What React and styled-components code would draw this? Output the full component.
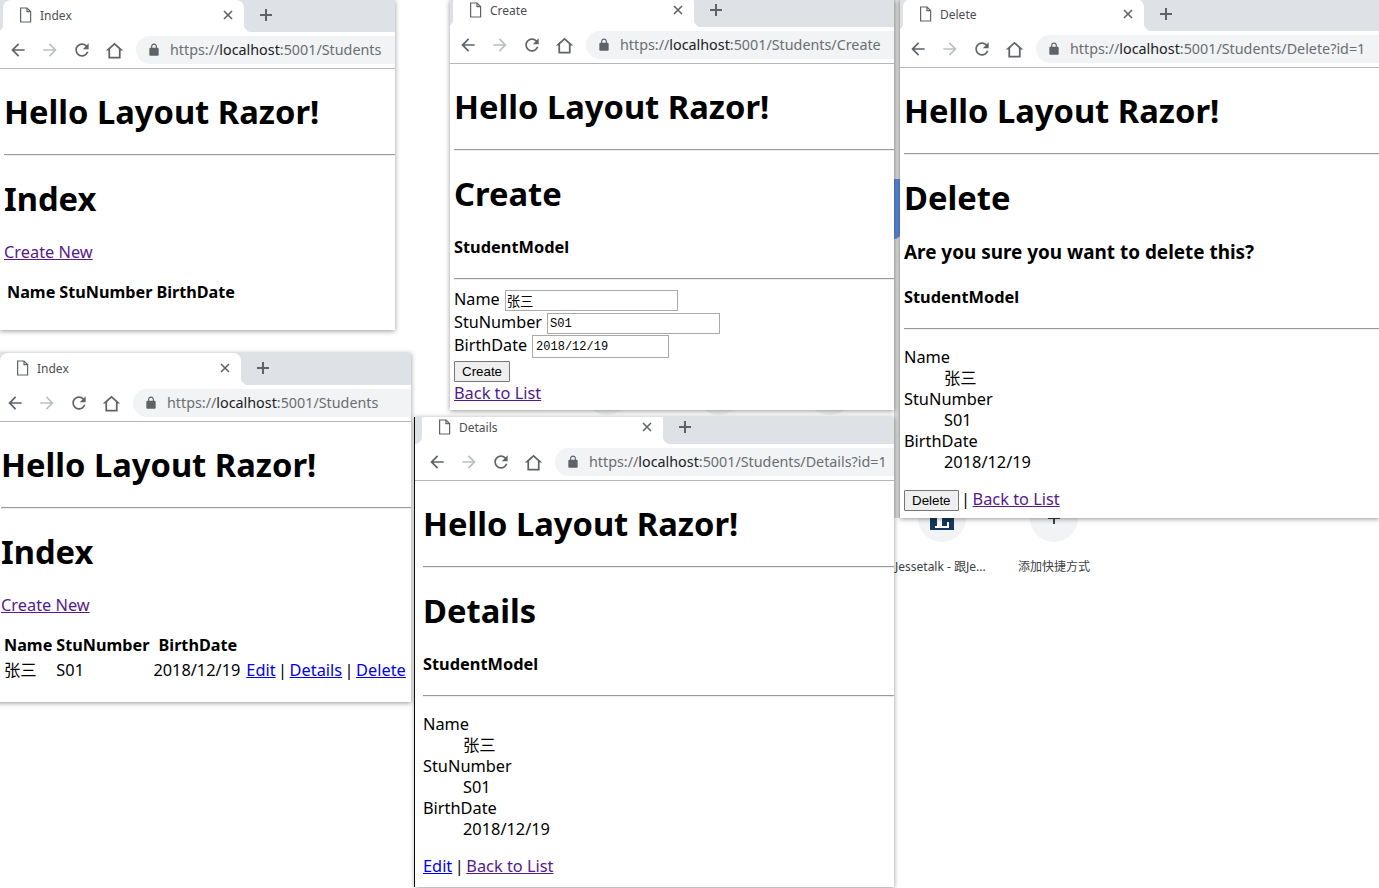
import React from "react";
import styled, { createGlobalStyle } from "styled-components";

const FONT = `"Noto Sans", "Noto Sans CJK SC", sans-serif`;

const Global = createGlobalStyle`
  html, body { margin: 0; padding: 0; background: #fff; }
  body { font-family: ${FONT}; color: #000; }
`;

const Desktop = styled.div`
  position: relative;
  width: 1379px;
  height: 888px;
  overflow: hidden;
  background: #fff;
`;

const GapBand = styled.div`
  position: absolute;
  left: 894px;
  top: 0;
  width: 7px;
  height: 518px;
  background: linear-gradient(90deg, #cfcfcf, #e2e2e2 50%, #cfcfcf);
`;

const BlueShape = styled.div`
  position: absolute;
  left: 894px;
  top: 179px;
  width: 7px;
  height: 60px;
  background: #5a8ad8;
  border-bottom-right-radius: 7px;
`;

const TileCircle = styled.div`
  position: absolute;
  width: 48px;
  height: 48px;
  border-radius: 50%;
  background: #f1f3f4;
  display: flex;
  align-items: center;
  justify-content: center;
`;

const TileLabel = styled.div`
  position: absolute;
  top: 559px;
  font-size: 12px;
  line-height: 16px;
  color: #3c4043;
  white-space: nowrap;
`;

const Frame = styled.section`
  position: absolute;
  background: #fff;
  display: flex;
  flex-direction: column;
  overflow: hidden;
  box-shadow: 0 1px 5px rgba(0, 0, 0, 0.42)${(p) => (p.$edge ? ", -1px 0 0 #111" : "")};
`;

const TabStrip = styled.div`
  flex: none;
  height: ${(p) => p.$height}px;
  background: #dee1e6;
  display: flex;
  align-items: flex-end;
  padding-left: ${(p) => 3 + p.$shift}px;
  overflow: hidden;
`;

const Tab = styled.div`
  position: relative;
  flex: none;
  box-sizing: border-box;
  width: 241px;
  height: 32px;
  padding: 0 11px 2px 16px;
  background: #fff;
  border-radius: 8px 8px 0 0;
  display: flex;
  align-items: center;
  color: #5f6368;
  &::before, &::after {
    content: "";
    position: absolute;
    bottom: 0;
    width: 8px;
    height: 8px;
  }
  &::before {
    left: -8px;
    background: radial-gradient(circle at 0 0, transparent 8px, #fff 8.5px);
  }
  &::after {
    right: -8px;
    background: radial-gradient(circle at 100% 0, transparent 8px, #fff 8.5px);
  }
`;

const TabTitle = styled.span`
  flex: 1;
  margin-left: 8px;
  font-size: 12px;
  color: #4a4d52;
`;

const PlusBtn = styled.span`
  flex: none;
  display: flex;
  margin: 0 0 10px 15px;
  color: #5f6368;
`;

const Toolbar = styled.div`
  flex: none;
  height: 36px;
  background: #fff;
  display: flex;
  align-items: center;
  padding-left: ${(p) => 2 + p.$shift}px;
  border-bottom: 1px solid #b4b6b8;
`;

const NavBtn = styled.span`
  flex: none;
  width: 32px;
  display: flex;
  justify-content: center;
  color: ${(p) => (p.$off ? "#bcc0c4" : "#5f6368")};
`;

const Omnibox = styled.div`
  flex: 1;
  min-width: 0;
  height: 28px;
  margin-left: 6px;
  padding-left: 11px;
  background: #f1f3f4;
  border-radius: 14px 0 0 14px;
  display: flex;
  align-items: center;
  gap: 9px;
  overflow: hidden;
  white-space: nowrap;
  color: #5f6368;
`;

const Url = styled.span`
  font-size: 14.32px;
  padding-bottom: 2px;
  color: #6a6e73;
`;

const UrlHost = styled.span`
  color: #202124;
`;

const Page = styled.main`
  flex: 1;
  min-height: 0;
  padding-left: ${(p) => 4 + p.$shift}px;
  font-size: 16.35px;
  line-height: 21px;
  display: flow-root;
`;

const Title = styled.h1`
  font-size: 32.7px;
  line-height: 40px;
  padding-top: 2px;
  margin: 21.44px 0;
  font-weight: 700;
`;

const Rule = styled.hr`
  margin: 8px 0;
  border: 0;
  border-top: 1px solid #9a9a9a;
  border-bottom: 1px solid #eeeeee;
  height: 0;
`;

const Question = styled.h3`
  font-size: 18.92px;
  line-height: 25px;
  margin: 18.72px 0;
  font-weight: 700;
`;

const Model = styled.h4`
  font-size: 16.35px;
  line-height: 19px;
  padding-top: 2px;
  margin: 21.28px 0;
  font-weight: 700;
`;

const Para = styled.p`
  margin: 16px 0;
  line-height: 19px;
  padding-top: 2px;
`;

const BackLine = styled.div`
  line-height: 19px;
  padding-top: 2px;
`;

const Anchor = styled.a`
  color: ${(p) => (p.$fresh ? "#0000ee" : "#551a8b")};
  text-decoration: underline;
`;

const Pipe = styled.span`
  margin: 0 -1.75px;
`;

const Table = styled.table`
  border-collapse: separate;
  border-spacing: 2px;
  font-size: 16.35px;
  line-height: 19px;
  white-space: nowrap;
  th, td { padding: 3px 1px 1px; }
  th { font-size: 16.2px; }
  td { text-align: left; }
  td:nth-child(3) { padding-right: 3px; }
`;

const Dl = styled.dl`
  margin: 16px 0;
  line-height: 19px;
  dt, dd { padding-top: 2px; }
  dd { margin: 0 0 0 40px; }
`;

const Field = styled.div`
  display: flex;
  align-items: center;
  gap: 5px;
  height: 23px;
  font-size: 16.2px;
`;

const TextInput = styled.input`
  box-sizing: border-box;
  width: ${(p) => p.$w}px;
  height: ${(p) => p.$h}px;
  margin-top: 2px;
  border: 1px solid #a9a9a9;
  padding: 0 ${(p) => p.$pad}px;
  font-family: "Liberation Mono", "Noto Sans CJK SC", monospace;
  font-size: ${(p) => p.$size}px;
  color: #000;
  background: #fff;
  outline: none;
`;

const Button = styled.button`
  box-sizing: border-box;
  height: 21px;
  padding: 0 7px;
  border: 1px solid #767676;
  border-radius: 1px;
  background: #efefef;
  font-family: "Liberation Sans", sans-serif;
  font-size: 13.33px;
  color: #000;
`;

const ButtonRow = styled.div`
  padding-top: ${(p) => p.$top}px;
  line-height: 21px;
`;

/* icons */
const Glyph = ({ d, size = 20 }) => (
  <svg width={size} height={size} viewBox="0 0 24 24" fill="currentColor"><path d={d} /></svg>
);
const Back = () => <Glyph d="M20 11H7.83l5.59-5.59L12 4l-8 8 8 8 1.41-1.41L7.83 13H20v-2z" />;
const Forward = () => <Glyph d="M4 11h12.17l-5.59-5.59L12 4l8 8-8 8-1.41-1.41L16.17 13H4v-2z" />;
const Reload = () => (
  <Glyph d="M17.65 6.35C16.2 4.9 14.21 4 12 4c-4.42 0-7.99 3.58-7.99 8s3.57 8 7.99 8c3.73 0 6.84-2.55 7.73-6h-2.08c-.82 2.33-3.04 4-5.65 4-3.31 0-6-2.69-6-6s2.69-6 6-6c1.66 0 3.14.69 4.22 1.78L13 11h7V4l-2.35 2.35z" />
);
const Home = () => (
  <Glyph size={21} d="M12 3 2 12h3v9h14v-9h3L12 3zm5 16H7v-8.8l5-4.5 5 4.5V19z" />
);
const Lock = () => (
  <Glyph size={14} d="M18 8h-1V6c0-2.76-2.24-5-5-5S7 3.24 7 6v2H6c-1.1 0-2 .9-2 2v10c0 1.1.9 2 2 2h12c1.1 0 2-.9 2-2V10c0-1.1-.9-2-2-2zM9 8V6c0-1.66 1.34-3 3-3s3 1.34 3 3v2H9z" />
);
const FileIcon = () => (
  <svg width="13" height="16" viewBox="0 0 13 16" fill="none" stroke="#5f6368" strokeWidth="1.2">
    <path d="M1.6 1H8l3.6 3.6V15H1.6z" />
    <path d="M8 1v3.6h3.6" />
  </svg>
);
const CloseIcon = () => (
  <svg width="10" height="10" viewBox="0 0 10 10" stroke="#5f6368" strokeWidth="1.6">
    <path d="M1 1l8 8M9 1l-8 8" />
  </svg>
);
const PlusIcon = () => (
  <svg width="14" height="14" viewBox="0 0 14 14" stroke="currentColor" strokeWidth="2">
    <path d="M7 1v12M1 7h12" />
  </svg>
);
const LogoMark = () => (
  <svg width="24" height="24" viewBox="0 0 24 24">
    <rect width="24" height="24" fill="#14395b" />
    <path d="M5 22v-2h2V6h5v14h5v-4h2v6z" fill="#fff" />
  </svg>
);

const BrowserWindow = ({ left, top, width, height, strip, shift = 0, edge, title, rest, children }) => (
  <Frame $edge={edge} style={{ left, top, width, height }}>
    <TabStrip $height={strip} $shift={shift}>
      <Tab>
        <FileIcon />
        <TabTitle>{title}</TabTitle>
        <CloseIcon />
      </Tab>
      <PlusBtn><PlusIcon /></PlusBtn>
    </TabStrip>
    <Toolbar $shift={shift}>
      <NavBtn><Back /></NavBtn>
      <NavBtn $off><Forward /></NavBtn>
      <NavBtn><Reload /></NavBtn>
      <NavBtn><Home /></NavBtn>
      <Omnibox>
        <Lock />
        <Url>https://<UrlHost>localhost</UrlHost>{rest}</Url>
      </Omnibox>
    </Toolbar>
    <Page $shift={shift}>{children}</Page>
  </Frame>
);

const Hello = () => (
  <>
    <Title>Hello Layout Razor!</Title>
    <Rule />
  </>
);

const Details = () => (
  <Dl>
    <dt>Name</dt>
    <dd>张三</dd>
    <dt>StuNumber</dt>
    <dd>S01</dd>
    <dt>BirthDate</dt>
    <dd>2018/12/19</dd>
  </Dl>
);

const Heads = () => (
  <thead>
    <tr>
      <th>Name</th>
      <th>StuNumber</th>
      <th>BirthDate</th>
      <th></th>
    </tr>
  </thead>
);

export default function App() {
  return (
    <Desktop>
      <Global />
      <GapBand />
      <BlueShape />
      <TileCircle style={{ left: 583, top: 367 }} />
      <TileCircle style={{ left: 695, top: 367 }} />
      <TileCircle style={{ left: 806, top: 367 }} />
      <TileCircle style={{ left: 918, top: 494 }}><LogoMark /></TileCircle>
      <TileCircle style={{ left: 1030, top: 494, color: "#3c4043" }}><PlusIcon /></TileCircle>
      <TileLabel style={{ left: 895 }}>Jessetalk - 跟Je...</TileLabel>
      <TileLabel style={{ left: 1018 }}>添加快捷方式</TileLabel>

      <BrowserWindow left={0} top={0} width={395} height={330} strip={32} title="Index" rest=":5001/Students">
        <Hello />
        <Title>Index</Title>
        <Para><Anchor href="#">Create New</Anchor></Para>
        <Table><Heads /></Table>
      </BrowserWindow>

      <BrowserWindow left={450} top={0} width={444} height={410} strip={27} title="Create" rest=":5001/Students/Create">
        <Hello />
        <Title>Create</Title>
        <Model>StudentModel</Model>
        <Rule />
        <Field>Name <TextInput $w={173} $h={21} $pad={1} $size={13.33} defaultValue="张三" /></Field>
        <Field>StuNumber <TextInput $w={173} $h={21} $pad={2} $size={12.2} defaultValue="S01" /></Field>
        <Field>BirthDate <TextInput $w={137} $h={23} $pad={3} $size={12} defaultValue="2018/12/19" /></Field>
        <ButtonRow $top={3}><Button>Create</Button></ButtonRow>
        <BackLine><Anchor href="#">Back to List</Anchor></BackLine>
      </BrowserWindow>

      <BrowserWindow left={900} top={0} width={479} height={518} strip={31} title="Delete" rest=":5001/Students/Delete?id=1">
        <Hello />
        <Title>Delete</Title>
        <Question>Are you sure you want to delete this?</Question>
        <Model>StudentModel</Model>
        <Rule />
        <Details />
        <ButtonRow $top={1}>
          <Button>Delete</Button> <Pipe>|</Pipe> <Anchor href="#">Back to List</Anchor>
        </ButtonRow>
      </BrowserWindow>

      <BrowserWindow left={-3} top={353} width={414} height={349} strip={32} title="Index" rest=":5001/Students">
        <Hello />
        <Title>Index</Title>
        <Para><Anchor href="#">Create New</Anchor></Para>
        <Table>
          <Heads />
          <tbody>
            <tr>
              <td>张三</td>
              <td>S01</td>
              <td>2018/12/19</td>
              <td>
                <Anchor $fresh href="#">Edit</Anchor> <Pipe>|</Pipe> <Anchor $fresh href="#">Details</Anchor> <Pipe>|</Pipe> <Anchor $fresh href="#">Delete</Anchor>
              </td>
            </tr>
          </tbody>
        </Table>
      </BrowserWindow>

      <BrowserWindow left={415} top={417} width={479} height={470} strip={27} shift={4} edge title="Details" rest=":5001/Students/Details?id=1">
        <Hello />
        <Title>Details</Title>
        <Model>StudentModel</Model>
        <Rule />
        <Details />
        <ButtonRow $top={1}>
          <Anchor $fresh href="#">Edit</Anchor> <Pipe>|</Pipe> <Anchor href="#">Back to List</Anchor>
        </ButtonRow>
      </BrowserWindow>
    </Desktop>
  );
}
